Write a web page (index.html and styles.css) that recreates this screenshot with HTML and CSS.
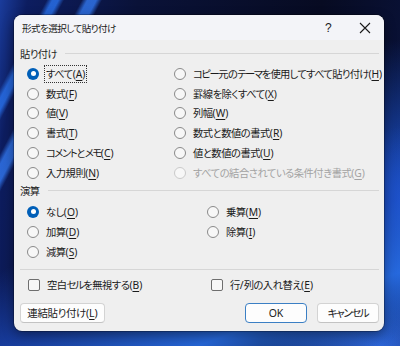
FILE: index.html
```html
<!DOCTYPE html>
<html lang="ja">
<head>
<meta charset="utf-8">
<link rel="stylesheet" href="styles.css">
</head>
<body>
<div class="desk">
  <div class="dialog">
    <div class="titlebar">
      <span class="title">形式を選択して貼り付け</span>
      <span class="help">?</span>
      <svg class="close" width="12" height="12" viewBox="0 0 12 12"><path d="M1 1L11 11M11 1L1 11" stroke="#1a1a1a" stroke-width="1.1"/></svg>
    </div>
    <div class="body">
      <div class="group-head"><span>貼り付け</span><i class="rule"></i></div>
      <div class="paste-grid">
        <div class="col">
          <div class="opt"><i class="radio on"></i><span class="lbl focus">すべて<span class="key">(<u>A</u>)</span></span></div>
          <div class="opt"><i class="radio"></i><span class="lbl">数式<span class="key">(<u>F</u>)</span></span></div>
          <div class="opt"><i class="radio"></i><span class="lbl">値<span class="key">(<u>V</u>)</span></span></div>
          <div class="opt"><i class="radio"></i><span class="lbl">書式<span class="key">(<u>T</u>)</span></span></div>
          <div class="opt"><i class="radio"></i><span class="lbl"><span class="kt">コメント</span>と<span class="kt">メモ</span><span class="key">(<u>C</u>)</span></span></div>
          <div class="opt"><i class="radio"></i><span class="lbl">入力規則<span class="key">(<u>N</u>)</span></span></div>
        </div>
        <div class="col">
          <div class="opt tight"><i class="radio"></i><span class="lbl"><span class="kt">コピー</span>元の<span class="kt">テーマ</span>を使用してすべて貼り付け<span class="key">(<u>H</u>)</span></span></div>
          <div class="opt"><i class="radio"></i><span class="lbl">罫線を除くすべて<span class="key">(<u>X</u>)</span></span></div>
          <div class="opt"><i class="radio"></i><span class="lbl">列幅<span class="key">(<u>W</u>)</span></span></div>
          <div class="opt"><i class="radio"></i><span class="lbl">数式と数値の書式<span class="key">(<u>R</u>)</span></span></div>
          <div class="opt"><i class="radio"></i><span class="lbl">値と数値の書式<span class="key">(<u>U</u>)</span></span></div>
          <div class="opt disabled"><i class="radio"></i><span class="lbl">すべての結合されている条件付き書式<span class="key">(<u>G</u>)</span></span></div>
        </div>
      </div>
      <div class="group-head op"><span>演算</span><i class="rule"></i></div>
      <div class="op-grid">
        <div class="col">
          <div class="opt"><i class="radio on"></i><span class="lbl">なし<span class="key">(<u>O</u>)</span></span></div>
          <div class="opt"><i class="radio"></i><span class="lbl">加算<span class="key">(<u>D</u>)</span></span></div>
          <div class="opt"><i class="radio"></i><span class="lbl">減算<span class="key">(<u>S</u>)</span></span></div>
        </div>
        <div class="col">
          <div class="opt"><i class="radio"></i><span class="lbl">乗算<span class="key">(<u>M</u>)</span></span></div>
          <div class="opt"><i class="radio"></i><span class="lbl">除算<span class="key">(<u>I</u>)</span></span></div>
        </div>
      </div>
      <i class="sep"></i>
      <div class="check-row">
        <div class="opt"><i class="check"></i><span class="lbl">空白<span class="kt">セル</span>を無視する<span class="key">(<u>B</u>)</span></span></div>
        <div class="opt"><i class="check"></i><span class="lbl">行<span class="key">/</span>列の入れ替え<span class="key">(<u>E</u>)</span></span></div>
      </div>
      <div class="buttons">
        <button class="btn link">連結貼り付け<span class="key">(<u>L</u>)</span></button>
        <span class="spacer"></span>
        <button class="btn ok"><span class="key">OK</span></button>
        <button class="btn cancel"><span class="kt">キャンセル</span></button>
      </div>
    </div>
  </div>
</div>
</body>
</html>
```
FILE: styles.css
```css
html, body {
  margin: 0;
  padding: 0;
}
body {
  width: 400px;
  height: 346px;
  overflow: hidden;
  font-family: "Noto Sans", "Noto Sans CJK JP", sans-serif;
  font-feature-settings: "palt";
  letter-spacing: -0.5px;
  color: #1b1b1b;
}
.desk {
  width: 400px;
  height: 346px;
  padding: 15px 0 0 14px;
  box-sizing: border-box;
  background:
    linear-gradient(118deg, transparent 0 8%, rgba(40,110,230,0.85) 9% 10%, transparent 11% 14%, rgba(50,120,240,0.8) 15% 16.5%, transparent 17.5%),
    linear-gradient(160deg, transparent 0 55%, rgba(30,80,200,0.6) 70%, rgba(40,110,230,0.9) 85%, transparent 100%),
    radial-gradient(ellipse 90px 160px at 400px 200px, rgba(30,90,220,0.9), transparent),
    radial-gradient(ellipse 120px 60px at 380px 346px, rgba(50,110,230,0.9), transparent),
    linear-gradient(100deg, #1a3c9c 0, #0d1d60 6%, #0a1238 30%, #070b22 70%, #0a1440 100%);
}
.dialog {
  width: 370px;
  height: 316px;
  background: #efefef;
  border-radius: 8px;
  overflow: hidden;
  box-shadow: 0 0 0 1px rgba(0,0,0,0.25), 0 4px 12px rgba(0,0,0,0.4);
  display: flex;
  flex-direction: column;
}
.titlebar {
  height: 25px;
  flex: none;
  background: #f3f4f8;
  display: flex;
  align-items: center;
  padding: 0 0 0 8px;
}
.title {
  flex: 1;
  font-size: 9.6px;
  letter-spacing: -0.6px;
}
.help {
  font-family: "Liberation Sans", sans-serif;
  font-size: 12px;
  width: 12px;
  margin-right: 22px;
}
.close {
  margin-right: 13px;
}
.body {
  padding: 0 5px 0 6px;
  font-size: 10.3px;
}
.key {
  letter-spacing: 0;
}
.kt {
  letter-spacing: -1.4px;
}
.tight {
  letter-spacing: -0.7px;
}
.tight .key {
  letter-spacing: -0.2px;
}
.group-head {
  display: flex;
  align-items: center;
  height: 20px;
  margin-top: 3px;
}
.group-head .rule {
  flex: 1;
  height: 1px;
  background: #d6d6d6;
  margin-left: 8px;
}
.group-head.op {
  margin-top: -2px;
}
.paste-grid {
  display: grid;
  grid-template-columns: 147px 1fr;
  padding-left: 7px;
  padding-top: 1px;
}
.op-grid {
  display: grid;
  grid-template-columns: 180px 1fr;
  padding-left: 7px;
  padding-top: 1px;
}
.opt {
  height: 19.8px;
  display: flex;
  align-items: center;
  white-space: nowrap;
}
.op-grid .opt {
  height: 20px;
}
.radio {
  width: 12px;
  height: 12px;
  border-radius: 50%;
  border: 1px solid #8a8a8a;
  box-sizing: border-box;
  background: #f7f7f7;
  margin-right: 6px;
  flex: none;
  position: relative;
}
.radio.on {
  border: none;
  background: #005fb8;
}
.radio.on::after {
  content: "";
  position: absolute;
  left: 3.5px;
  top: 3.5px;
  width: 5px;
  height: 5px;
  border-radius: 50%;
  background: #fff;
}
.disabled {
  color: #a3a3a3;
}
.disabled .radio {
  border-color: #cacaca;
}
.lbl {
  padding: 0 1px;
  line-height: 16px;
}
.lbl.focus {
  outline: 1px dotted #333;
  outline-offset: 0;
}
u {
  text-decoration-thickness: 1px;
  text-underline-offset: 2px;
}
.sep {
  display: block;
  height: 1px;
  background: #d6d6d6;
  margin: 7px 0 0 0;
}
.check-row {
  display: grid;
  grid-template-columns: 183px 1fr;
  padding-left: 8px;
  margin-top: 5px;
}
.check-row .opt {
  height: 20px;
}
.check {
  width: 12px;
  height: 12px;
  border: 1px solid #6e6e6e;
  border-radius: 2px;
  box-sizing: border-box;
  background: #f7f7f7;
  margin-right: 6px;
  flex: none;
}
.buttons {
  display: flex;
  align-items: center;
  margin-top: 8px;
}
.spacer {
  flex: 1;
}
.btn {
  height: 20px;
  font-family: inherit;
  font-feature-settings: "palt";
  letter-spacing: -0.4px;
  font-size: 10.5px;
  color: #1b1b1b;
  background: #fdfdfd;
  border: 1px solid #d3d3d3;
  border-bottom-color: #c3c3c3;
  border-radius: 4px;
  padding: 0;
  line-height: 16px;
}
.btn.link {
  width: 85px;
}
.btn.ok {
  width: 62px;
  border-color: #3b7fc4;
  margin-right: 10px;
}
.btn.cancel {
  width: 62px;
}
```
